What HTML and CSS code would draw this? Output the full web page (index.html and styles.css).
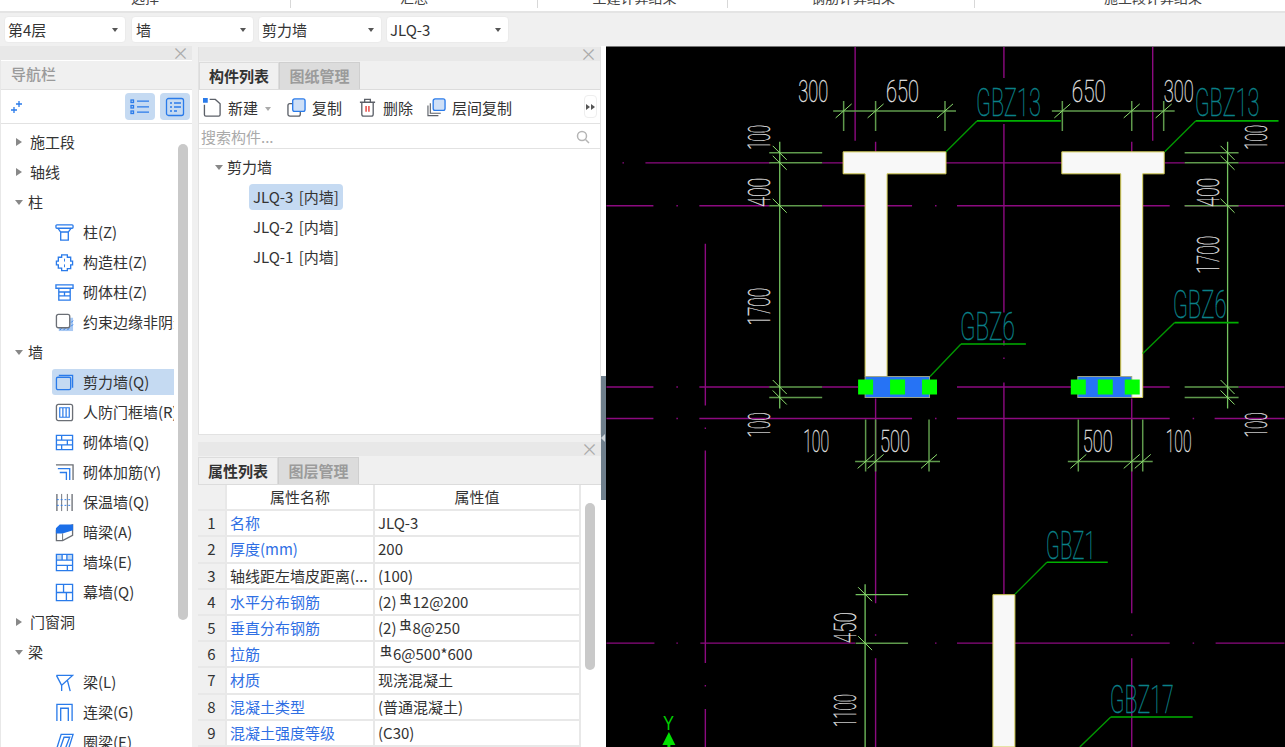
FILE: index.html
```html
<!DOCTYPE html>
<html lang="zh-CN">
<head>
<meta charset="utf-8">
<title>剪力墙</title>
<link rel="stylesheet" href="styles.css">
</head>
<body>
<div class="app">
  <div class="ribbon">
    <div class="rib s1"><span>选择</span></div>
    <div class="rib s2"><span>汇总</span></div>
    <div class="rib s3"><span>土建计算结果</span></div>
    <div class="rib s4"><span>钢筋计算结果</span></div>
    <div class="rib s5"><span>施工段计算结果</span></div>
  </div>
  <div class="combos">
    <div class="combo"><span>第4层</span><i class="caret"></i></div>
    <div class="combo"><span>墙</span><i class="caret"></i></div>
    <div class="combo"><span>剪力墙</span><i class="caret"></i></div>
    <div class="combo"><span>JLQ-3</span><i class="caret"></i></div>
  </div>
  <div class="work">
    <section class="nav">
      <div class="dock"><span class="x">×</span></div>
      <div class="navtitle">导航栏</div>
      <div class="navtools">
        <svg class="ic spark" viewBox="0 0 14 14"><path d="M9 1v6M6 4h6M4 7v6M1 10h6" fill="none" stroke="#2a7bea" stroke-width="1.3"/></svg>
        <div class="tbtn first"><svg viewBox="0 0 20 16" width="20" height="16"><g fill="none" stroke="#2a7bea" stroke-width="1.3"><rect x="1" y="1" width="2.5" height="2.5"/><rect x="1" y="6.5" width="2.5" height="2.5"/><rect x="1" y="12" width="2.5" height="2.5"/><path d="M7 2.2h12M7 7.8h12M7 13.2h12"/></g></svg></div>
        <div class="tbtn"><svg viewBox="0 0 20 20" width="20" height="20"><g fill="none" stroke="#2a7bea" stroke-width="1.3"><rect x="1.5" y="1.5" width="17" height="17" rx="2"/><path d="M5 6h2M9 6h7M5 10h2M9 10h7M5 14h2M9 14h3"/></g></svg></div>
      </div>
      <div class="navbody">
        <div class="navtree">
          <div class="t0"><i class="tri r"></i>施工段</div>
          <div class="t0"><i class="tri r"></i>轴线</div>
          <div class="t0"><i class="tri d"></i>柱</div>
          <div class="t1"><svg class="ti" viewBox="0 0 20 20"><g fill="none" stroke="#2a7bea" stroke-width="1.4"><rect x="1" y="2" width="18" height="3.5" rx="1"/><path d="M3 5.5l3 4h8l3-4M6 9.5V18h8V9.5"/></g></svg>柱(Z)</div>
          <div class="t1"><svg class="ti" viewBox="0 0 20 20"><path d="M7 2h6v2.500h3.500v4h2v4h-2v4H13V18.500H7V16H3.500v-3.500h-2v-4h2v-4H7z" fill="none" stroke="#2a7bea" stroke-width="1.4"/><path d="M10 6v3M10 12v3" stroke="#2a7bea"/></svg>构造柱(Z)</div>
          <div class="t1"><svg class="ti" viewBox="0 0 20 20"><g fill="none" stroke="#2a7bea" stroke-width="1.4"><path d="M1 2h18v3.500H1zM4 5.500h12V18H4zM4 9.500h12M4 13.500h12M10 9.500v4"/></g></svg>砌体柱(Z)</div>
          <div class="t1"><svg class="ti" viewBox="0 0 20 20"><rect x="4" y="5" width="15" height="14" fill="#a9c9f3"/><path d="M5 18l2-2M9 18l2-2M13 18l2-2M17 14l2-2M17 10l2-2" stroke="#2a7bea"/><rect x="1.500" y="1.500" width="14" height="14" rx="2" fill="#fff" stroke="#6b6f76" stroke-width="1.400"/></svg><span class="clip">约束边缘非阴影区(Z)</span></div>
          <div class="t0"><i class="tri d"></i>墙</div>
          <div class="t1 on"><svg class="ti" viewBox="0 0 20 20"><g fill="none" stroke="#2a7bea" stroke-width="1.400"><path d="M4 2.500h14.500v13"/><rect x="1.500" y="4.500" width="15" height="13" rx="1.500"/></g></svg>剪力墙(Q)</div>
          <div class="t1"><svg class="ti" viewBox="0 0 20 20"><rect x="1.500" y="1.500" width="17" height="17" rx="2" fill="none" stroke="#6b6f76" stroke-width="1.400"/><path d="M5 5h10v10H5zM8.300 5v10M11.700 5v10" fill="none" stroke="#2a7bea" stroke-width="1.300"/></svg>人防门框墙(R)</div>
          <div class="t1"><svg class="ti" viewBox="0 0 20 20"><path d="M1.500 2.500h17v15h-17zM1.500 7.500h17M1.500 12.500h17M7 2.500v5M13 7.500v5M7 12.500v5" fill="none" stroke="#2a7bea" stroke-width="1.400"/></svg>砌体墙(Q)</div>
          <div class="t1"><svg class="ti" viewBox="0 0 20 20"><path d="M1 2h18v16" fill="none" stroke="#6b6f76" stroke-width="1.400"/><path d="M3 6h12.500v12M5 10h7v8" fill="none" stroke="#2a7bea" stroke-width="1.400"/></svg>砌体加筋(Y)</div>
          <div class="t1"><svg class="ti" viewBox="0 0 20 20"><path d="M2 1v18M18 1v18" stroke="#6b6f76" stroke-width="1.400"/><path d="M7 1v18M13 1v18" stroke="#6b6f76"/><path d="M2 7h16M2 13h16" stroke="#2a7bea" stroke-dasharray="2 2"/></svg>保温墙(Q)</div>
          <div class="t1"><svg class="ti" viewBox="0 0 20 20"><path d="M1.500 7.500L18.500 2v11L8 18.500H1.500z" fill="#fff" stroke="#6b6f76" stroke-width="1.400"/><path d="M1 8V5.500L5 1.500h14V7.500L8 11H1z" fill="#1c6fe8"/><path d="M8 11v7" stroke="#6b6f76"/></svg>暗梁(A)</div>
          <div class="t1"><svg class="ti" viewBox="0 0 20 20"><rect x="1.500" y="1.500" width="6" height="6" fill="#c5daf2"/><rect x="12.500" y="1.500" width="6" height="6" fill="#c5daf2"/><path d="M1.500 1.500h17v17h-17zM1.500 7.500h17M1.500 13h17M7.500 1.500v6M12.500 1.500v6M13 13v5.500" fill="none" stroke="#2a7bea" stroke-width="1.400"/></svg>墙垛(E)</div>
          <div class="t1"><svg class="ti" viewBox="0 0 20 20"><path d="M1.500 1.500h17v17h-17zM1.500 10h17M9 1.500V10M12 10v8.500" fill="none" stroke="#2a7bea" stroke-width="1.400"/></svg>幕墙(Q)</div>
          <div class="t0"><i class="tri r"></i>门窗洞</div>
          <div class="t0"><i class="tri d"></i>梁</div>
          <div class="t1"><svg class="ti" viewBox="0 0 20 20"><path d="M1.500 2.500h17L7 13v6M1.500 2.500L7 13M13 7.500l3 11.500" fill="none" stroke="#2a7bea" stroke-width="1.400"/></svg>梁(L)</div>
          <div class="t1"><svg class="ti" viewBox="0 0 20 20"><path d="M2 19V1.500h16V19M6 19V5.500h8V19" fill="none" stroke="#2a7bea" stroke-width="1.400"/></svg>连梁(G)</div>
          <div class="t1"><svg class="ti" viewBox="0 0 20 20"><path d="M6.500 1.500h12.500L13.500 19H1zM9.500 4.500h6L11 16H5.500z" fill="none" stroke="#2a7bea" stroke-width="1.400"/></svg>圈梁(E)</div>
        </div>
        <div class="track"><div class="thumb navthumb"></div></div>
      </div>
    </section>

    <div class="mid">
      <section class="upper">
        <div class="dock"><span class="x">×</span></div>
        <div class="tabs"><div class="tab active">构件列表</div><div class="tab">图纸管理</div></div>
        <div class="tools">
          <div class="tool"><svg class="tic" viewBox="0 0 20 20"><rect x="0" y="0" width="5" height="5" fill="#2a7bea"/><path d="M1.500 7v10.500a1.500 1.500 0 0 0 1.500 1.500h13.500a1.500 1.500 0 0 0 1.500-1.500V6l-5-4.500H7" fill="none" stroke="#5c6068" stroke-width="1.400"/></svg>新建<i class="caret small"></i></div>
          <div class="tool c"><svg class="tic" viewBox="0 0 20 20"><rect x="1" y="6" width="13" height="13" rx="2" fill="#fff" stroke="#5c6068" stroke-width="1.400"/><rect x="6" y="1" width="13" height="13" rx="2" fill="#cfe0f7" stroke="#2a7bea" stroke-width="1.400"/></svg>复制</div>
          <div class="tool e"><svg class="tic" viewBox="0 0 20 20"><path d="M2 4.500h16M7 4.500V1.500h6v3M4 4.500V17a2 2 0 0 0 2 2h8a2 2 0 0 0 2-2V4.500" fill="none" stroke="#5c6068" stroke-width="1.400"/><path d="M8.500 8.500v6M11.500 8.500v6" stroke="#e5322d" stroke-width="1.400"/></svg>删除</div>
          <div class="tool l"><svg class="tic" viewBox="0 0 20 20"><path d="M1 8v10.500h11M3.500 5.500v10.500h11" fill="none" stroke="#5c6068" stroke-width="1.200"/><rect x="6.500" y="1" width="12.500" height="12" rx="2" fill="#cfe0f7" stroke="#2a7bea" stroke-width="1.400"/></svg>层间复制</div>
          <div class="more"><i></i><i></i></div>
        </div>
        <div class="search"><span>搜索构件...</span><svg viewBox="0 0 14 14" width="14" height="14"><circle cx="6" cy="6" r="4.500" fill="none" stroke="#b5b5b5" stroke-width="1.500"/><path d="M9.500 9.500L13 13" stroke="#b5b5b5" stroke-width="1.500"/></svg></div>
        <div class="list">
          <div class="lhead"><i class="tri d"></i>剪力墙</div>
          <div class="litem"><span class="on">JLQ-3 [内墙]</span></div>
          <div class="litem"><span>JLQ-2 [内墙]</span></div>
          <div class="litem"><span>JLQ-1 [内墙]</span></div>
        </div>
      </section>
      <section class="lower">
        <div class="dock"><span class="x">×</span></div>
        <div class="tabs"><div class="tab active">属性列表</div><div class="tab">图层管理</div></div>
        <div class="props">
          <div class="grid">
            <div class="h idx"></div><div class="h">属性名称</div><div class="h">属性值</div>
            <div class="idx">1</div><div class="n blue">名称</div><div class="v">JLQ-3</div>
            <div class="idx">2</div><div class="n blue">厚度(mm)</div><div class="v">200</div>
            <div class="idx">3</div><div class="n">轴线距左墙皮距离(...</div><div class="v">(100)</div>
            <div class="idx">4</div><div class="n blue">水平分布钢筋</div><div class="v">(2)<span class="rebar">虫</span>12@200</div>
            <div class="idx">5</div><div class="n blue">垂直分布钢筋</div><div class="v">(2)<span class="rebar">虫</span>8@250</div>
            <div class="idx">6</div><div class="n blue">拉筋</div><div class="v"><span class="rebar first">虫</span>6@500*600</div>
            <div class="idx">7</div><div class="n blue">材质</div><div class="v">现浇混凝土</div>
            <div class="idx">8</div><div class="n blue">混凝土类型</div><div class="v">(普通混凝土)</div>
            <div class="idx">9</div><div class="n blue">混凝土强度等级</div><div class="v">(C30)</div>
          </div>
          <div class="track ptrack"><div class="thumb propthumb"></div></div>
        </div>
      </section>
    </div>

    <div class="split"><div class="grip"><i></i></div></div>

    <svg class="cad" viewBox="606 46 679 701" width="679" height="701">
      <path class="axis" d="M645 162H770M822 162H843M946 162H1062M1165 162H1185M1239 162H1285M622 162h1.500M606 205H653M676 205h1.500M699 205H769M822 205H865M887 205H912M935 205h1.500M957 205H1121M1143 205H1170M1185 205H1285M606 386.500H653M676 386.500h1.500M699 386.500H769M822 386.500H858M957 386.500H1071M1140 386.500H1170M1239 386.500H1285M606 418H653M676 418h1.500M699 418H912M935 418h1.500M957 418H1170M1193 418h1.500M1215 418H1285M606 643H654M676 643h1.500M700 643H855M935 643h1.500M957 643H993M1015 643H1170M1193 643h1.500M1216 643H1285"/>
      <path class="axis" d="M705 243V405M705 427v1.500M705 450V663M705 685v1.500M705 709V747M855 46V140M875.500 141V151M875.500 398V603M875.500 634v1.500M875.500 658V747M1004 46V77M1004 123V312M1004 340V345M1004 357v1.500M1004 382V594M1153 46V140M1132 141V151M1132 398V613M1132 634v1.500M1132 658V747"/>

      <path class="wall" d="M843 151H946V173H887V376H865V173H843Z"/>
      <path class="wall" d="M1062 151H1164.500V173H1143V397H1121V173H1062Z"/>
      <path class="wall" d="M993 594.500H1015V747H993Z"/>
      <rect class="hid" x="865" y="376" width="64.500" height="21"/>
      <rect class="hid" x="1078" y="376" width="54" height="21"/>
      <g class="node">
        <rect x="858" y="379" width="15" height="15"/><rect x="890" y="379" width="15" height="15"/><rect x="922" y="379" width="15" height="15"/>
        <rect x="1071" y="379" width="15" height="15"/><rect x="1098" y="379" width="15" height="15"/><rect x="1125" y="379" width="15" height="15"/>
      </g>

      <path class="dim" d="M833 110H956M843.500 100V130M875.500 100V130M945 100V130M1052 110H1175M1062.500 100V130M1132 100V130M1164 100V130"/>
      <path class="dim" d="M769 152H822M769 162H822M769 205H822M769 386.500H822M769 397H822M1185 152H1239M1185 162H1239M1185 205H1239M1185 386.500H1239M1185 397H1239"/>
      <path class="dim" d="M855 461H940M865.500 419V471M875.500 419V471M929 419V471M1068 461H1153M1078.500 419V471M1132 419V471M1143 419V471M855.500 643H908"/>
      <path class="dimv" d="M779.500 141V408M1228 141V408M865 584V747M855.500 594.500H908"/>
      <path class="tick" d="M835.500 117l16-14M867.500 117l16-14M937 117l16-14M1054.500 117l16-14M1124 117l16-14M1156 117l16-14M857.500 468l16-14M867.500 468l16-14M921 468l16-14M1070.500 468l16-14M1124 468l16-14M1135 468l16-14M772.500 145l14 14M772.500 155l14 14M772.500 198l14 14M772.500 379.500l14 14M772.500 390l14 14M1221 145l14 14M1221 155l14 14M1221 198l14 14M1221 379.500l14 14M1221 390l14 14M858 587l14 14M858 636l14 14"/>

      <path class="lead" d="M946 151L977 120M1165 151L1196 120M930 376L961 343.500M1143 353L1175 322M1015 594L1047 562M1080 747L1111 717"/>
      <path class="leadh" d="M977 120H1061M1196 120H1279M961 343.500H1026M1175 322H1239M1047 562H1108M1111 717H1193"/>

      <g class="dt">
        <text x="798" y="101" textLength="30" lengthAdjust="spacingAndGlyphs">300</text>
        <text x="886" y="101" textLength="33" lengthAdjust="spacingAndGlyphs">650</text>
        <text x="1072" y="101" textLength="34" lengthAdjust="spacingAndGlyphs">650</text>
        <text x="1164" y="101" textLength="30" lengthAdjust="spacingAndGlyphs">300</text>
        <text x="803" y="452" textLength="26" lengthAdjust="spacingAndGlyphs">100</text>
        <text x="880" y="452" textLength="30" lengthAdjust="spacingAndGlyphs">500</text>
        <text x="1083" y="452" textLength="30" lengthAdjust="spacingAndGlyphs">500</text>
        <text x="1166" y="452" textLength="26" lengthAdjust="spacingAndGlyphs">100</text>
        <text transform="translate(770 149) rotate(-90)" textLength="25" lengthAdjust="spacingAndGlyphs">100</text>
        <text transform="translate(770 206) rotate(-90)" textLength="29" lengthAdjust="spacingAndGlyphs">400</text>
        <text transform="translate(770 325) rotate(-90)" textLength="38" lengthAdjust="spacingAndGlyphs">1700</text>
        <text transform="translate(770 437) rotate(-90)" textLength="25" lengthAdjust="spacingAndGlyphs">100</text>
        <text transform="translate(1267 149) rotate(-90)" textLength="25" lengthAdjust="spacingAndGlyphs">100</text>
        <text transform="translate(1219 206) rotate(-90)" textLength="29" lengthAdjust="spacingAndGlyphs">400</text>
        <text transform="translate(1219 273) rotate(-90)" textLength="38" lengthAdjust="spacingAndGlyphs">1700</text>
        <text transform="translate(1267 437) rotate(-90)" textLength="25" lengthAdjust="spacingAndGlyphs">100</text>
        <text transform="translate(856 643) rotate(-90)" textLength="31" lengthAdjust="spacingAndGlyphs">450</text>
        <text transform="translate(856 727) rotate(-90)" textLength="33" lengthAdjust="spacingAndGlyphs">1100</text>
      </g>
      <g class="gbz">
        <text x="976" y="115" textLength="65" lengthAdjust="spacingAndGlyphs">GBZ13</text>
        <text x="1195" y="115" textLength="65" lengthAdjust="spacingAndGlyphs">GBZ13</text>
        <text x="960" y="339" textLength="55" lengthAdjust="spacingAndGlyphs">GBZ6</text>
        <text x="1173" y="317" textLength="54" lengthAdjust="spacingAndGlyphs">GBZ6</text>
        <text x="1046" y="559" textLength="50" lengthAdjust="spacingAndGlyphs">GBZ1</text>
        <text x="1110" y="713" textLength="64" lengthAdjust="spacingAndGlyphs">GBZ17</text>
      </g>
      <text class="yaxis" x="662.500" y="730" textLength="11" lengthAdjust="spacingAndGlyphs">Y</text>
      <path class="yarrow" d="M668.500 732L675 745H670V747H667V745H662Z"/>
    </svg>
  </div>
</div>
</body>
</html>
```

FILE: styles.css
```css
* { box-sizing: border-box; }
html, body { margin: 0; padding: 0; }
body {
  width: 1285px;
  height: 747px;
  overflow: hidden;
  background: #f0f0f0;
  color: #333;
  font: 15px/20px "Noto Sans CJK SC", "Liberation Sans", sans-serif;
}
i { display: block; font-style: normal; }
.app { display: flex; flex-direction: column; width: 1285px; height: 747px; }

/* ribbon remnant */
.ribbon { display: flex; flex: none; height: 13px; background: #fff; border-bottom: 2px solid #e4e4e4; overflow: hidden; }
.rib { flex: none; height: 8px; text-align: center; border-right: 1px solid #d8d8d8; color: #444; font-size: 14px; line-height: 18px; }
.rib span { display: block; margin-top: -12px; white-space: nowrap; }
.s1 { width: 291px; }
.s2 { width: 247px; }
.s3 { width: 190px; padding-left: 4px; }
.s4 { width: 247px; padding-left: 4px; }
.s5 { width: 356px; border-right: 0; }

/* combos */
.combos { display: flex; flex: none; height: 33px; padding: 3px 0 0 4px; gap: 4px; }
.combo { display: flex; align-items: center; justify-content: space-between; width: 123px; height: 27px; padding: 0 7px 0 3px; background: #fff; border: 1px solid #ebebeb; border-radius: 4px; }
.combo:nth-child(1) { width: 122px; }
.combo:nth-child(2) { width: 123px; margin-left: 1px; padding-left: 4px; }
.combo:nth-child(3) { width: 124px; padding-left: 3px; }
.combo:nth-child(4) { width: 123px; padding-left: 3px; }
.caret { width: 0; height: 0; border: 3px solid transparent; border-top: 4px solid #555; border-bottom: 0; }
.caret.small { border-top-color: #aaa; border-width: 3px; border-top-width: 4px; border-bottom: 0; margin: 2px 0 0 7px; }

/* workspace */
.work { display: flex; flex: 1; min-height: 0; }
.dock { flex: none; display: flex; justify-content: flex-end; align-items: center; height: 14px; padding-right: 3px; background: #e8e8e8; }
.x { color: #aaa; font-size: 17px; line-height: 14px; }

/* navigator */
.nav { display: flex; flex-direction: column; flex: none; width: 192px; background: #fff; overflow: hidden; border-left: 1px solid #e8e8e8; }
.navtitle { flex: none; height: 28px; padding: 1px 0 0 10px; margin-top: 1px; line-height: 24px; background: #f0f0f0; color: #9a9a9a; font-weight: 500; }
.navtools { flex: none; display: flex; align-items: center; height: 35px; padding-right: 1px; border-top: 1px solid #e2e2e2; border-bottom: 1px solid #e2e2e2; }
.spark { width: 14px; height: 14px; margin: 0 101px 0 9px; }
.tbtn { display: flex; align-items: center; justify-content: center; width: 30px; height: 27px; background: #c5daf2; border-radius: 4px; }
.tbtn.first { margin-right: 5px; }
.navbody { display: flex; flex: 1; min-height: 0; padding-top: 3px; }
.navtree { display: flex; flex-direction: column; flex: none; width: 173px; overflow: hidden; }
.t0 { flex: none; display: flex; align-items: center; height: 30px; padding-left: 14px; line-height: 30px; }
.tri { flex: none; width: 15px; }
.tri.r { position: relative; height: 0; width: 0; border: 4.5px solid transparent; border-left: 6px solid #888; border-right: 0; margin: 0 8px 0 1px; }
.tri.d { height: 0; width: 0; border: 4.5px solid transparent; border-top: 5px solid #888; border-bottom: 0; margin-right: 5px; }
.t1 { flex: none; display: flex; align-items: center; height: 26px; margin: 2px 0 2px 51px; padding-left: 3px; white-space: nowrap; overflow: hidden; border-radius: 3px 0 0 3px; }
.t1.on { background: #c5daf2; }
.ti { flex: none; width: 19px; height: 19px; margin-right: 9px; }
.clip { white-space: nowrap; }
.track { flex: none; }
.nav .track { width: 18px; padding: 17px 0 0 4px; }
.thumb { width: 10px; background: #c9c9c9; border-radius: 5px; }
.navthumb { height: 476px; }

/* mid column */
.mid { display: flex; flex-direction: column; flex: none; width: 403px; margin-left: 6px; padding-top: 1px; }
.upper { display: flex; flex-direction: column; flex: none; height: 388px; background: #f0f0f0; border: 1px solid #e2e2e2; border-width: 0 1px 1px 1px; }
.lower { display: flex; flex-direction: column; flex: 1; min-height: 0; margin-top: 7px; background: #f0f0f0; overflow: hidden; }
.tabs { flex: none; display: flex; height: 29px; padding-top: 1px; border-bottom: 1px solid #dcdcdc; background: #f0f0f0; font-weight: 700; }
.tab { width: 81px; text-align: center; line-height: 26px; color: #9b9b9b; background: #dcdcdc; border: 1px solid #cfcfcf; border-bottom: 0; }
.tab.active { width: 80px; color: #333; background: #f0f0f0; border-color: #dcdcdc; }
.tools { flex: none; display: flex; align-items: center; position: relative; height: 34px; background: #fff; padding: 2px 0 0 4px; border-bottom: 1px solid #e2e2e2; }
.tool { display: flex; align-items: center; white-space: nowrap; }
.tic { flex: none; width: 19px; height: 19px; margin-right: 6px; }
.tool.c { margin-left: 16px; }
.tool.e { margin-left: 16px; }
.tool.l { margin-left: 14px; }
.more { position: absolute; right: 3px; top: 5px; display: flex; align-items: center; justify-content: center; gap: 1px; width: 13px; height: 23px; background: #fff; border: 1px solid #eee; border-radius: 4px; }
.more i { width: 0; height: 0; border: 3px solid transparent; border-left: 4px solid #555; border-right: 0; }
.search { flex: none; display: flex; align-items: center; justify-content: space-between; height: 25px; padding: 1px 10px 0 2px; background: #fff; color: #aaa; border-bottom: 1px solid #e2e2e2; }
.list { flex: 1; background: #fff; padding-top: 3px; }
.lhead { display: flex; align-items: center; height: 30px; padding-left: 16px; }
.lhead .tri.d { margin-right: 4px; }
.litem { height: 30px; padding: 2px 0 0 50px; word-spacing: 2px; }
.litem span { display: inline-block; height: 26px; padding: 0 4px; line-height: 26px; border-radius: 4px; }
.litem span.on { background: #c5daf2; }

/* properties */
.props { flex: 1; display: flex; min-height: 0; overflow: hidden; background: #fff; }
.grid { flex: none; display: grid; grid-template-columns: 29px 148px 206px; grid-auto-rows: 26.2px; align-content: start; width: 383px; }
.grid > div { display: flex; align-items: center; padding-left: 3px; border-right: 2px solid #e8e8e8; border-bottom: 2px solid #e8e8e8; white-space: nowrap; overflow: hidden; }
.grid > .idx { justify-content: center; padding-left: 0; background: #f0f0f0; }
.grid > .h { justify-content: center; padding-left: 0; height: 26px; }
.blue { color: #2f6fe4; }
.rebar { display: inline-block; margin: 0 1px 0 3px; font-size: 12px; line-height: 12px; font-weight: 500; transform: translateY(-3px); }
.rebar.first { margin-left: 2px; }
.ptrack { width: 20px; padding: 18px 0 0 4px; }
.propthumb { height: 167px; }

/* splitter */
.split { flex: none; width: 5px; display: flex; flex-direction: column; background: #fff; padding-top: 330px; }
.grip { display: flex; align-items: center; height: 124px; background: #6f7f8c; }
.grip i { width: 0; height: 0; border: 4px solid transparent; border-right: 4px solid #cfd5da; border-left: 0; }

/* drawing */
.cad { flex: none; display: block; background: #000; border-top: 1px solid #777; }
.axis { fill: none; stroke: #8c0a80; stroke-width: 1.4; }
.wall { fill: #f8f8f8; stroke: #d6cf55; stroke-width: 1; }
.hid { fill: #2673f5; stroke: #9ca48a; stroke-width: 1; }
.node rect { fill: #00ff00; }
.dim { fill: none; stroke: #5f9a4c; stroke-width: 1.5; }
.dimv { fill: none; stroke: #74c35f; stroke-width: 1.3; }
.tick { fill: none; stroke: #8fe070; stroke-width: 1; }
.lead { fill: none; stroke: #009600; stroke-width: 1.4; }
.leadh { fill: none; stroke: #00b000; stroke-width: 1.6; }
.dt text { font-family: Roboto, "Liberation Sans", sans-serif; font-weight: 100; font-size: 32px; fill: #e8e8e8; stroke: #e8e8e8; stroke-width: .35; }
.gbz text { font-family: Roboto, "Liberation Sans", sans-serif; font-weight: 100; font-size: 38px; fill: #0a8088; stroke: #0a8088; stroke-width: .45; }
.yaxis { font-family: "Liberation Sans", sans-serif; font-size: 20px; fill: #00d000; }
.yarrow { fill: #00e000; }
```
